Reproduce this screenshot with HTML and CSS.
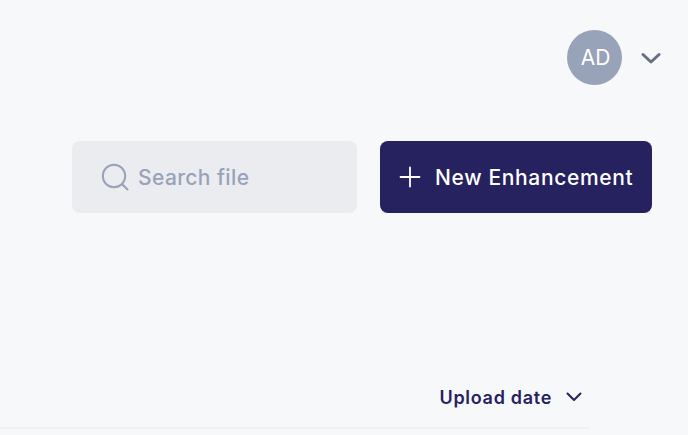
FILE: index.html
```html
<!DOCTYPE html>
<html lang="en">
<head>
  <meta charset="UTF-8">
  <title>Enhancements</title>
  <link rel="stylesheet" href="styles.css">
</head>
<body>

  <header class="topbar">
    <div class="avatar">AD</div>
    <svg class="user-chevron" width="20" height="12" viewBox="0 0 20 12" fill="none">
      <path d="M2 2.5l8 7.5 8-7.5" stroke="#667085" stroke-width="3" stroke-linecap="round" stroke-linejoin="round"/>
    </svg>
  </header>

  <div class="toolbar">
    <div class="search">
      <svg class="search-icon" width="28" height="28" viewBox="0 0 28 28" fill="none">
        <circle cx="13" cy="13" r="11.2" stroke="#98a2b8" stroke-width="2"/>
        <path d="M21.5 21.5l5 5" stroke="#98a2b8" stroke-width="2" stroke-linecap="round"/>
      </svg>
      <span class="search-text">Search file</span>
    </div>
    <button class="new-btn" type="button">
      <svg width="22" height="22" viewBox="0 0 22 22" fill="none">
        <path d="M11 1.5v19M1.5 11h19" stroke="#fff" stroke-width="1.8" stroke-linecap="round"/>
      </svg>
      <span>New Enhancement</span>
    </button>
  </div>

  <div class="sort-row">
    <span class="sort-label">Upload date</span>
    <svg width="16" height="10" viewBox="0 0 16 10" fill="none">
      <path d="M1.5 1.5l6.5 6.5 6.5-6.5" stroke="#26215f" stroke-width="2" stroke-linecap="round" stroke-linejoin="round"/>
    </svg>
  </div>

  <div class="divider"></div>

</body>
</html>
```

FILE: styles.css
```css
* {
  box-sizing: border-box;
}

html, body {
  height: 100%;
}

body {
  margin: 0;
  background: #f7f8fa;
  font-family: Inter, "Open Sans", sans-serif;
  overflow: hidden;
}

.topbar {
  display: flex;
  justify-content: flex-end;
  align-items: center;
  gap: 19px;
  padding: 30px 27px 0 0;
}

.avatar {
  width: 55px;
  height: 55px;
  border-radius: 50%;
  background: #98a2b8;
  color: #fff;
  font-size: 21px;
  padding-left: 2px;
  display: flex;
  align-items: center;
  justify-content: center;
}

.toolbar {
  display: flex;
  gap: 23px;
  margin: 56px 36px 0 72px;
}

.search {
  width: 285px;
  height: 72px;
  background: #ebecf0;
  border-radius: 8px;
  display: flex;
  align-items: center;
  gap: 9px;
  padding-left: 29px;
}

.search-text {
  color: #98a2b8;
  font-size: 21px;
  font-weight: 500;
  letter-spacing: 0.4px;
}

.new-btn {
  width: 272px;
  height: 72px;
  background: #26215f;
  color: #fff;
  border: none;
  border-radius: 8px;
  display: flex;
  align-items: center;
  gap: 14px;
  padding: 0 0 0 19px;
  font-family: inherit;
  font-size: 21px;
  font-weight: 500;
  letter-spacing: 0.65px;
  white-space: nowrap;
}

.sort-row {
  display: flex;
  justify-content: flex-end;
  align-items: center;
  gap: 14px;
  margin-top: 172px;
  padding-right: 106px;
  height: 24px;
}

.sort-label {
  color: #26215f;
  font-size: 18px;
  font-weight: 600;
  letter-spacing: 0.7px;
}

.divider {
  width: 589px;
  height: 2px;
  margin-top: 18px;
  background: #eff0f3;
}
```
